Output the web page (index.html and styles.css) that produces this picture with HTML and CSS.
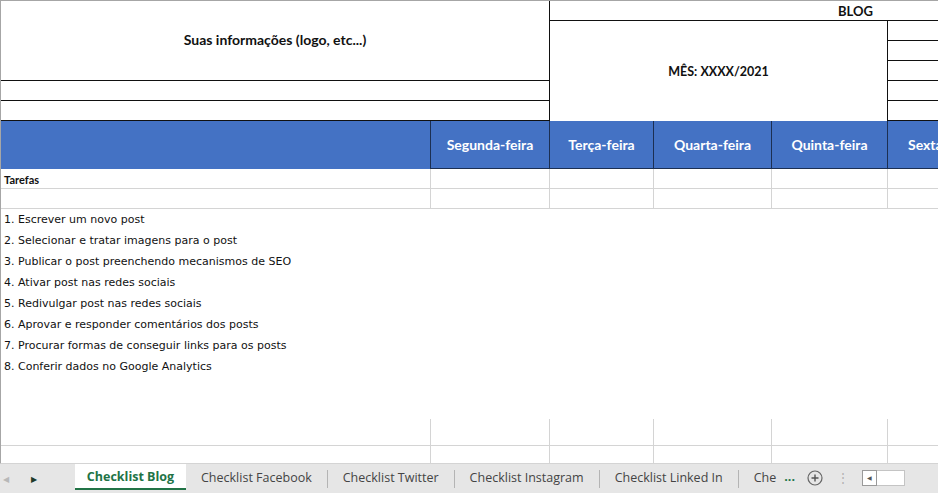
FILE: index.html
```html
<!DOCTYPE html>
<html lang="pt-BR">
<head>
    <meta charset="UTF-8">
    <title>Checklist Blog</title>
    <link rel="stylesheet" href="styles.css">
</head>
<body>
    <div class="sheet">
        <!-- cabeçalho -->
        <div class="cell info">Suas informações (logo, etc...)</div>
        <div class="cell blog">BLOG</div>
        <div class="cell month">MÊS: XXXX/2021</div>
        <div class="cell side r2"></div>
        <div class="cell side r3"></div>
        <div class="cell side r4"></div>
        <div class="cell side r5"></div>
        <div class="cell side r6"></div>
        <div class="cell wide r5"></div>
        <div class="cell wide r6"></div>

        <!-- dias da semana -->
        <div class="cell day first"></div>
        <div class="cell day">Segunda-feira</div>
        <div class="cell day">Terça-feira</div>
        <div class="cell day">Quarta-feira</div>
        <div class="cell day">Quinta-feira</div>
        <div class="cell day clip">Sexta-feira</div>

        <div class="cell grid label">Tarefas</div>
        <div class="cell grid"></div>
        <div class="cell grid"></div>
        <div class="cell grid"></div>
        <div class="cell grid"></div>
        <div class="cell grid"></div>

        <div class="cell grid"></div>
        <div class="cell grid"></div>
        <div class="cell grid"></div>
        <div class="cell grid"></div>
        <div class="cell grid"></div>
        <div class="cell grid"></div>

        <ul class="tasks">
            <li>1. Escrever um novo post</li>
            <li>2. Selecionar e tratar imagens para o post</li>
            <li>3. Publicar o post preenchendo mecanismos de SEO</li>
            <li>4. Ativar post nas redes sociais</li>
            <li>5. Redivulgar post nas redes sociais</li>
            <li>6. Aprovar e responder comentários dos posts</li>
            <li>7. Procurar formas de conseguir links para os posts</li>
            <li>8. Conferir dados no Google Analytics</li>
        </ul>

        <div class="cell grid"></div>
        <div class="cell grid"></div>
        <div class="cell grid"></div>
        <div class="cell grid"></div>
        <div class="cell grid"></div>
        <div class="cell grid"></div>

        <div class="cell grid"></div>
        <div class="cell grid"></div>
        <div class="cell grid"></div>
        <div class="cell grid"></div>
        <div class="cell grid"></div>
        <div class="cell grid"></div>
    </div>

    <div class="tabbar">
        <div class="nav">
            <span class="arrow off">&#9664;</span>
            <span class="arrow">&#9654;</span>
        </div>
        <div class="tab active">Checklist Blog</div>
        <div class="tab">Checklist Facebook</div>
        <div class="sep"></div>
        <div class="tab">Checklist Twitter</div>
        <div class="sep"></div>
        <div class="tab">Checklist Instagram</div>
        <div class="sep"></div>
        <div class="tab">Checklist Linked In</div>
        <div class="sep"></div>
        <div class="tab cut">Che</div>
        <span class="more">...</span>
        <span class="add">
            <svg width="16" height="16" viewBox="0 0 16 16">
                <circle cx="8" cy="8" r="7" fill="none" stroke="#666" stroke-width="1.2"/>
                <path d="M8 4.5v7M4.5 8h7" stroke="#555" stroke-width="1.4"/>
            </svg>
        </span>
        <span class="dots">&#8942;</span>
        <div class="scroll">
            <span class="scroll-btn">&#9664;</span>
            <span class="thumb"></span>
        </div>
    </div>
</body>
</html>
```

FILE: styles.css
```css
* {
    margin: 0;
    padding: 0;
    box-sizing: border-box;
}

body {
    width: 938px;
    height: 493px;
    overflow: hidden;
    background-color: white;
    font-family: Lato, "Liberation Sans", sans-serif;
    color: #111;
}

/* Planilha */
.sheet {
    display: grid;
    grid-template-columns: 430px 119px 104px 118px 116px 51px;
    grid-template-rows: 20px 20px 20px 20px 20px 20px 48px 20px 20px 210px 27px 18px;
    height: 463px;
    border-top: 1px solid #a6a6a6;
    border-left: 1px solid #a6a6a6;
}

.cell {
    font-weight: bold;
    font-size: 14px;
    display: flex;
    align-items: center;
    justify-content: center;
    white-space: nowrap;
}

.info {
    grid-column: 1 / 3;
    grid-row: 1 / 5;
    border-right: 1px solid #111;
    border-bottom: 1px solid #111;
    padding-bottom: 2px;
}

.blog {
    grid-column: 3 / 7;
    grid-row: 1 / 2;
    border-bottom: 1px solid #111;
    justify-content: flex-start;
    padding-left: 288px;
    font-size: 13px;
}

.month {
    grid-column: 3 / 6;
    grid-row: 2 / 7;
    border-right: 1px solid #111;
    padding-top: 1px;
    font-size: 12.5px;
}

.side {
    grid-column: 6 / 7;
    border-bottom: 1px solid #111;
}

.wide {
    grid-column: 1 / 3;
    border-right: 1px solid #111;
    border-bottom: 1px solid #111;
}

.r2 { grid-row: 2 / 3; }
.r3 { grid-row: 3 / 4; }
.r4 { grid-row: 4 / 5; }
.r5 { grid-row: 5 / 6; }
.r6 { grid-row: 6 / 7; }

.day {
    background-color: #4472c4;
    color: white;
    border-right: 1px solid #1c2f52;
    border-bottom: 1px solid #1c2f52;
}

.day.first {
    border-bottom: none;
}

.day.clip {
    justify-content: flex-start;
    padding-left: 20px;
    overflow: hidden;
    border-right: none;
}

.grid {
    border-right: 1px solid #d4d4d4;
    border-bottom: 1px solid #d4d4d4;
}

.label {
    justify-content: flex-start;
    font-size: 11px;
    padding-left: 3px;
    padding-top: 1px;
}

.tasks {
    grid-column: 1 / 7;
    list-style: none;
    font-family: "DejaVu Sans", sans-serif;
    font-size: 11px;
    line-height: 21px;
    padding-left: 3px;
    color: #111;
}

/* Abas */
.tabbar {
    height: 30px;
    display: flex;
    align-items: stretch;
    background-color: #e6e6e6;
    border-top: 1px solid #c8c8c8;
    font-family: "Open Sans", "Noto Sans", sans-serif;
    font-size: 12.5px;
    color: #444;
}

.nav {
    width: 75px;
    display: flex;
    align-items: center;
    padding-left: 3px;
    gap: 22px;
    font-size: 8px;
}

.arrow {
    color: #1e3a2a;
}

.arrow.off {
    color: #b8b8b8;
}

.tab {
    display: flex;
    align-items: center;
    padding: 0 15px 2px 15px;
    white-space: nowrap;
}

.tab.active {
    width: 111px;
    justify-content: center;
    background-color: white;
    color: #217346;
    font-weight: bold;
    border-bottom: 2px solid #217346;
    margin-bottom: 3px;
    padding: 0;
}

.tab.cut {
    padding-right: 8px;
}

.sep {
    width: 1px;
    background-color: #b4b4b4;
    margin: 6px 0 5px;
}

.more {
    display: flex;
    align-items: center;
    color: #217346;
    font-weight: bold;
    padding-bottom: 4px;
}

.add {
    display: flex;
    align-items: center;
    margin-left: 12px;
    padding-bottom: 2px;
}

.dots {
    display: flex;
    align-items: center;
    margin-left: 14px;
    color: #b0b0b0;
    font-size: 12px;
    padding-bottom: 2px;
}

.scroll {
    display: flex;
    align-items: center;
    margin-left: 13px;
    flex: 1;
    padding-bottom: 2px;
}

.scroll-btn {
    width: 15px;
    height: 16px;
    border: 1px solid #9a9a9a;
    background-color: white;
    color: #555;
    font-size: 6px;
    display: flex;
    align-items: center;
    justify-content: center;
}

.thumb {
    width: 28px;
    height: 16px;
    background-color: white;
    border: 1px solid #c4c4c4;
    border-left: none;
}
```
